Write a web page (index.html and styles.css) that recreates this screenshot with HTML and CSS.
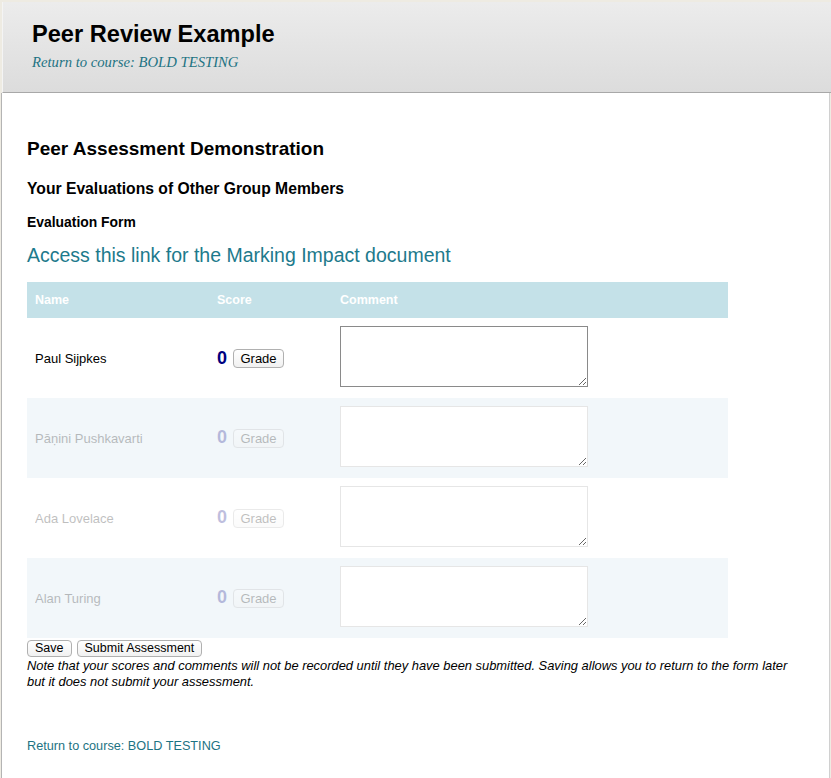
FILE: index.html
```html
<!DOCTYPE html>
<html>
<head>
<meta charset="utf-8">
<link rel="stylesheet" href="styles.css">
</head>
<body>
<div class="page">
  <header class="header">
    <h1 class="title">Peer Review Example</h1>
    <a class="crumb" href="#">Return to course: BOLD TESTING</a>
  </header>
  <main class="content">
    <h2 class="h-main">Peer Assessment Demonstration</h2>
    <h3 class="h-sub">Your Evaluations of Other Group Members</h3>
    <h4 class="h-form">Evaluation Form</h4>
    <a class="doc-link" href="#">Access this link for the Marking Impact document</a>
    <table class="grid">
      <thead>
        <tr class="head-row">
          <th class="c-name">Name</th>
          <th class="c-score">Score</th>
          <th class="c-comment">Comment</th>
        </tr>
      </thead>
      <tbody>
        <tr class="row">
          <td class="c-name">Paul Sijpkes</td>
          <td class="c-score"><span class="score">0</span><button class="grade">Grade</button></td>
          <td class="c-comment"><textarea class="comment"></textarea></td>
        </tr>
        <tr class="row alt off">
          <td class="c-name"><span class="dim">Pāṇini Pushkavarti</span></td>
          <td class="c-score"><span class="dim"><span class="score">0</span><button class="grade" disabled>Grade</button></span></td>
          <td class="c-comment"><textarea class="comment" disabled></textarea></td>
        </tr>
        <tr class="row off">
          <td class="c-name"><span class="dim">Ada Lovelace</span></td>
          <td class="c-score"><span class="dim"><span class="score">0</span><button class="grade" disabled>Grade</button></span></td>
          <td class="c-comment"><textarea class="comment" disabled></textarea></td>
        </tr>
        <tr class="row alt off">
          <td class="c-name"><span class="dim">Alan Turing</span></td>
          <td class="c-score"><span class="dim"><span class="score">0</span><button class="grade" disabled>Grade</button></span></td>
          <td class="c-comment"><textarea class="comment" disabled></textarea></td>
        </tr>
      </tbody>
    </table>
    <div class="actions">
      <button class="btn">Save</button>
      <button class="btn">Submit Assessment</button>
    </div>
    <p class="note">Note that your scores and comments will not be recorded until they have been submitted. Saving allows you to return to the form later but it does not submit your assessment.</p>
    <a class="foot-link" href="#">Return to course: BOLD TESTING</a>
  </main>
</div>
</body>
</html>
```
FILE: styles.css
```css
* { box-sizing: border-box; }
html, body { margin: 0; padding: 0; }
body {
  background: #eeebe2;
  font-family: "Liberation Sans", Arial, sans-serif;
  font-size: 13px;
  color: #000;
  height: 778px;
  overflow: hidden;
}
.page {
  padding-top: 2px;
}
.header {
  height: 91px;
  margin-left: 2px;
  background: linear-gradient(#ececec, #dcdcdc);
  border-bottom: 1px solid #a8a8a8;
  border-left: 1px solid #f4f4f4;
  padding: 18px 0 0 29px;
}
.title {
  margin: 0;
  font-size: 23.6px;
  line-height: 28px;
  font-weight: bold;
  color: #000;
}
.crumb {
  display: block;
  margin-top: 6px;
  font-family: "Liberation Serif", Georgia, serif;
  font-style: italic;
  font-size: 14.7px;
  color: #1d7383;
  text-decoration: none;
}
.content {
  background: #fff;
  border-left: 1px solid #b4b4b4;
  border-right: 1px solid #d0d0d0;
  border-bottom-left-radius: 4px;
  margin-left: 1px;
  margin-right: 1px;
  height: 700px;
  padding: 46px 0 0 25px;
}
.h-main {
  margin: 0;
  font-size: 19px;
  line-height: 20px;
  font-weight: bold;
}
.h-sub {
  margin: 20px 0 0;
  font-size: 15.7px;
  line-height: 20px;
  font-weight: bold;
}
.h-form {
  margin: 13px 0 0;
  font-size: 13.9px;
  line-height: 20px;
  font-weight: bold;
}
.doc-link {
  display: block;
  margin-top: 11px;
  font-size: 19.5px;
  line-height: 24px;
  color: #1d7a8c;
  text-decoration: none;
}
.grid {
  margin-top: 15px;
  width: 701px;
  border-collapse: collapse;
  border-spacing: 0;
}
.head-row {
  background: #c4e1e8;
  height: 36px;
}
.head-row th {
  color: #fff;
  font-weight: bold;
  font-size: 12.5px;
  text-align: left;
  padding: 0 8px;
}
.c-name { width: 182px; padding: 0 8px; }
.c-score { width: 123px; padding: 0 8px; }
.c-comment { padding: 0 8px; }
.row { height: 80px; }
.row td { vertical-align: middle; }
.row.alt { background: #f2f7fa; }
.dim { opacity: 0.25; }
.score {
  font-size: 18px;
  font-weight: bold;
  color: #000080;
  vertical-align: middle;
}
.grade {
  margin-left: 6px;
  font-family: "Liberation Sans", Arial, sans-serif;
  font-size: 13px;
  height: 19px;
  width: 51px;
  padding: 0;
  background: linear-gradient(#ffffff, #f1f1f1);
  border: 1px solid #b0b0b0;
  border-radius: 4px;
  color: #000;
  vertical-align: middle;
}
.comment {
  display: block;
  width: 248px;
  height: 61px;
  border: 1px solid #8a8a8a;
  margin: 0 0 4px;
  resize: both;
  background: #fff;
}
.comment:disabled {
  border-color: #e6e6e6;
  background: #fff;
}
.actions {
  margin-top: 2px;
  display: flex;
  gap: 5px;
}
.btn {
  font-family: "Liberation Sans", Arial, sans-serif;
  font-size: 12.5px;
  height: 17px;
  padding: 0 7px;
  line-height: 15px;
  background: linear-gradient(#ffffff, #f1f1f1);
  border: 1px solid #b0b0b0;
  border-radius: 4px;
  color: #000;
}
.note {
  margin: 1px 0 0;
  font-size: 12.9px;
  line-height: 16px;
  font-style: italic;
  width: 770px;
}
.foot-link {
  display: block;
  margin-top: 49px;
  font-size: 12.7px;
  color: #1d7383;
  text-decoration: none;
}
```
